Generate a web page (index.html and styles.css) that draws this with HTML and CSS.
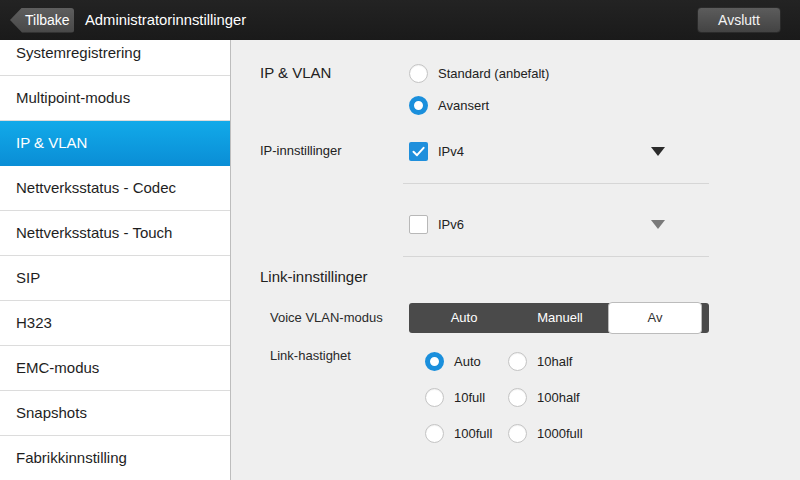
FILE: index.html
```html
<!DOCTYPE html>
<html lang="no">
<head>
<meta charset="utf-8">
<link rel="stylesheet" href="styles.css">
</head>
<body>
<div class="app">
  <header class="topbar">
    <div class="back">Tilbake</div>
    <div class="title">Administratorinnstillinger</div>
    <div class="quit">Avslutt</div>
  </header>
  <div class="main">
    <nav class="sidebar">
      <ul class="menu">
        <li class="item first">Systemregistrering</li>
        <li class="item">Multipoint-modus</li>
        <li class="item active">IP &amp; VLAN</li>
        <li class="item">Nettverksstatus - Codec</li>
        <li class="item">Nettverksstatus - Touch</li>
        <li class="item">SIP</li>
        <li class="item">H323</li>
        <li class="item">EMC-modus</li>
        <li class="item">Snapshots</li>
        <li class="item">Fabrikkinnstilling</li>
      </ul>
    </nav>
    <section class="content">
      <div class="row first-row">
        <div class="label big">IP &amp; VLAN</div>
        <div class="ctrl pad">
          <div class="opt"><span class="radio"></span><span class="txt">Standard (anbefalt)</span></div>
          <div class="opt"><span class="radio on"></span><span class="txt">Avansert</span></div>
        </div>
      </div>
      <div class="row">
        <div class="label ipl">IP-innstillinger</div>
        <div class="ctrl">
          <div class="block b1">
            <div class="check-row">
              <span class="check on"><svg viewBox="0 0 19 19" width="19" height="19"><path d="M4.5 9.8 L8 13.2 L14.6 5.8" fill="none" stroke="#fff" stroke-width="2" stroke-linecap="round" stroke-linejoin="round"/></svg></span>
              <span class="txt">IPv4</span>
              <span class="tri dark"></span>
            </div>
          </div>
          <div class="block b2">
            <div class="check-row">
              <span class="check"></span>
              <span class="txt">IPv6</span>
              <span class="tri light"></span>
            </div>
          </div>
        </div>
      </div>
      <div class="heading">Link-innstillinger</div>
      <div class="row vlan-row">
        <div class="label sub">Voice VLAN-modus</div>
        <div class="ctrl pad">
          <div class="seg">
            <div class="s">Auto</div>
            <div class="s">Manuell</div>
            <div class="s sel">Av</div>
          </div>
        </div>
      </div>
      <div class="row speed-row">
        <div class="label sub top">Link-hastighet</div>
        <div class="ctrl pad">
          <div class="grid">
            <div class="opt2"><span class="radio on"></span><span class="txt">Auto</span></div>
            <div class="opt2"><span class="radio"></span><span class="txt">10half</span></div>
            <div class="opt2"><span class="radio"></span><span class="txt">10full</span></div>
            <div class="opt2"><span class="radio"></span><span class="txt">100half</span></div>
            <div class="opt2"><span class="radio"></span><span class="txt">100full</span></div>
            <div class="opt2"><span class="radio"></span><span class="txt">1000full</span></div>
          </div>
        </div>
      </div>
    </section>
  </div>
</div>
</body>
</html>
```
FILE: styles.css
```css
* { box-sizing: border-box; margin: 0; padding: 0; }
html, body { width: 800px; height: 480px; overflow: hidden; }
body { font-family: "Liberation Sans", Arial, sans-serif; color: #222; background: #efefef; }
.app { width: 800px; height: 480px; display: flex; flex-direction: column; }

.topbar {
  height: 40px; flex: none;
  background: linear-gradient(#232323, #1a1a1a);
  display: flex; align-items: center; padding: 0 19px 0 10px;
}
.back {
  height: 25px; width: 64px;
  background: linear-gradient(#5e5e5e, #484848);
  clip-path: polygon(12px 0, 100% 0, 100% 100%, 12px 100%, 0 50%);
  border-radius: 0 3px 3px 0;
  color: #fff; font-size: 14px; line-height: 25px;
  padding-left: 15px;
}
.title { color: #fff; font-size: 14.8px; margin-left: 11px; flex: 1; }
.quit {
  width: 84px; height: 26px;
  border: 1px solid #2a2a2a; border-radius: 4px;
  background: linear-gradient(#5c5c5c, #434343);
  color: #f4f4f4; font-size: 14px; line-height: 24px; text-align: center;
}

.main { flex: 1; display: flex; min-height: 0; }
.sidebar {
  width: 231px; flex: none; background: #fff;
  border-right: 1px solid #bdbdbd; overflow: hidden;
}
.menu { list-style: none; margin-top: -9px; }
.item {
  height: 45px; line-height: 44px;
  border-bottom: 1px solid #dcdcdc;
  padding-left: 16px; font-size: 15px; color: #1e1e1e;
}
.item.active {
  background: linear-gradient(#12aae9, #0a8ed6);
  color: #fff; border-bottom-color: #0a8ed6;
}

.content { flex: 1; padding: 17px 0 0 29px; }
.row { display: flex; }
.label { width: 143px; flex: none; font-size: 13px; color: #222; }
.label.big { font-size: 15px; line-height: 32px; }
.label.ipl { line-height: 40px; padding-top: 10px; }
.label.sub { padding-left: 10px; line-height: 30px; color: #2a2a2a; }
.label.top { line-height: 26px; }
.ctrl { width: 306px; }
.ctrl.pad { padding-left: 6px; }

.opt { height: 32px; display: flex; align-items: center; }
.txt { font-size: 13px; color: #222; margin-left: 10px; }

.radio {
  width: 19px; height: 19px; border-radius: 50%; flex: none;
  background: #fff; border: 1px solid #c4c4c4;
  box-shadow: inset 0 1px 1px rgba(0,0,0,0.06);
}
.radio.on { background: #fff; border: 5.5px solid #1a8fdc; box-shadow: none; }

.block { border-bottom: 1px solid #d6d6d6; padding-left: 6px; }
.block.b1 { padding-top: 10px; padding-bottom: 12px; }
.block.b2 { padding-top: 20px; padding-bottom: 12px; }
.check-row { height: 40px; display: flex; align-items: center; }
.check {
  width: 19px; height: 19px; flex: none; border-radius: 2px;
  background: #fff; border: 1px solid #b8b8b8;
}
.check.on { background: #1f8fdc; border: none; }
.check svg { display: block; }
.tri {
  margin-left: auto; margin-right: 44px;
  width: 0; height: 0;
  border-left: 7px solid transparent; border-right: 7px solid transparent;
  border-top: 9px solid #2b2b2b;
}
.tri.light { border-top-color: #7a7a7a; }

.heading { font-size: 15px; height: 40px; line-height: 40px; color: #222; }

.vlan-row { margin-top: 6px; }
.seg {
  width: 300px; height: 30px; background: #4a4a4a; border-radius: 3px;
  display: flex; padding: 0 7px;
}
.s { width: 96px; flex: none; text-align: center; color: #fff; font-size: 13px; line-height: 30px; }
.s.sel {
  width: 94px;
  background: #fff; color: #333; border: 1px solid #bcbcbc; border-radius: 4px;
  margin: -1px 0; line-height: 30px;
}

.speed-row { margin-top: 10px; }
.grid {
  display: grid; grid-template-columns: 83px 100px; grid-auto-rows: 36px;
  padding-left: 16px;
}
.opt2 { display: flex; align-items: center; }
```
